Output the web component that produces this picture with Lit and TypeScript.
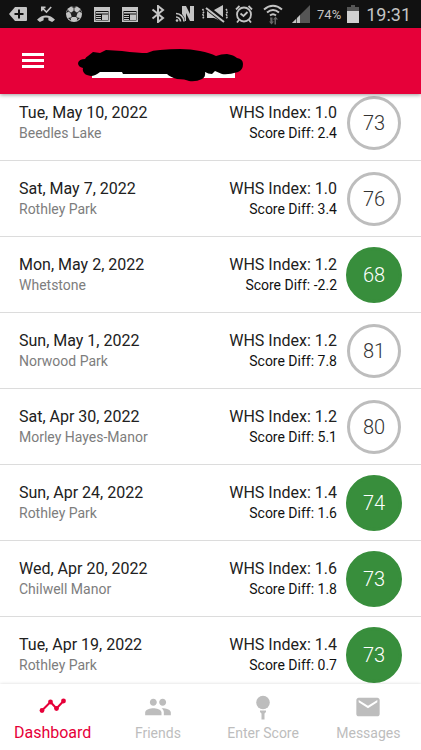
import { LitElement, html, css, svg } from "lit";
import { customElement, property } from "lit/decorators.js";

interface Round {
  date: string;
  course: string;
  index: string;
  diff: string;
  score: number;
  counting: boolean;
}

const rounds: Round[] = [
  { date: "Tue, May 10, 2022", course: "Beedles Lake", index: "1.0", diff: "2.4", score: 73, counting: false },
  { date: "Sat, May 7, 2022", course: "Rothley Park", index: "1.0", diff: "3.4", score: 76, counting: false },
  { date: "Mon, May 2, 2022", course: "Whetstone", index: "1.2", diff: "-2.2", score: 68, counting: true },
  { date: "Sun, May 1, 2022", course: "Norwood Park", index: "1.2", diff: "7.8", score: 81, counting: false },
  { date: "Sat, Apr 30, 2022", course: "Morley Hayes-Manor", index: "1.2", diff: "5.1", score: 80, counting: false },
  { date: "Sun, Apr 24, 2022", course: "Rothley Park", index: "1.4", diff: "1.6", score: 74, counting: true },
  { date: "Wed, Apr 20, 2022", course: "Chilwell Manor", index: "1.6", diff: "1.8", score: 73, counting: true },
  { date: "Tue, Apr 19, 2022", course: "Rothley Park", index: "1.4", diff: "0.7", score: 73, counting: true },
];

const newsPaths = svg`
  <path fill="currentColor" fill-rule="evenodd" d="M1 2h16v15H1zM2.500 6v9.500h13V6z"/>
  <path fill="currentColor" d="M3 7h12v1.500H3zM9 9.500h6v5.500H9zM3 10h5v1H3zM3 12h5v1H3zM3 14h5v1H3z"/>`;

@customElement("status-bar")
export class StatusBar extends LitElement {
  static styles = css`
    :host {
      display: flex;
      align-items: center;
      justify-content: space-between;
      height: 28px;
      padding: 0 10px 0 8px;
      background: #111;
      color: #c4c4c4;
    }
    .group {
      display: flex;
      align-items: center;
      gap: 10px;
    }
    .right {
      gap: 6px;
    }
    .spaced {
      margin-right: 4px;
    }
    svg {
      display: block;
      flex: none;
    }
    .percent {
      font-size: 13px;
    }
    .clock {
      font-size: 18px;
    }
  `;

  render() {
    return html`
      <div class="group">
        <svg width="19" height="18" viewBox="0 0 19 18">
          <path fill="currentColor" d="M7 2h11a1 1 0 0 1 1 1v12a1 1 0 0 1-1 1H7L1 9z"/>
          <path stroke="#111" stroke-width="2" d="M6.500 9h9M11 4.500v9"/>
        </svg>
        <svg width="18" height="18" viewBox="0 0 19 18">
          <path fill="currentColor" d="M0 15c5-6 14-6 19 0l-3 2.500-4-2v-2.500q-2.500-.7-5 0v2.500l-4 2z"/>
          <path fill="none" stroke="currentColor" stroke-width="1.600" d="M5 6V2h4M5 2l5 5 5-5.500"/>
        </svg>
        <svg width="18" height="18" viewBox="0 0 18 18">
          <circle cx="9" cy="9" r="8" fill="currentColor"/>
          <path fill="#222" d="M9 5.500l3.500 2.500-1.300 4H6.800L5.500 8zM6 1.800L9 3l3-1.200L9.500 1h-1zM1 8l2-3.500 1 2zM17 8l-2-3.500-1 2zM3 13l2.500-.5.7 3.300zM15 13l-2.500-.5-.7 3.300z"/>
          <path stroke="#222" stroke-width=".8" d="M9 3v3M4 6.500L6 8M14 6.500L12 8M5.500 12.500L7 12M12.500 12.500L11 12"/>
        </svg>
        <svg width="18" height="18" viewBox="0 0 18 18">${newsPaths}</svg>
        <svg width="18" height="18" viewBox="0 0 18 18">${newsPaths}</svg>
      </div>
      <div class="group right">
        <svg class="spaced" width="14" height="18" viewBox="0 0 14 18">
          <path fill="none" stroke="currentColor" stroke-width="2" d="M1.500 4.500L12 13l-5 4V1l5 4L1.500 13.500"/>
        </svg>
        <svg width="20" height="18" viewBox="0 0 20 18">
          <path fill="currentColor" d="M7 16V1h4l4 8V1h4v15h-4L11 8v8z"/>
          <path fill="#111" d="M0 6q10 1 10 11H0z"/>
          <path fill="none" stroke="currentColor" stroke-width="1.700" d="M1 8.500a8 8 0 0 1 8 8M1 12A4.500 4.500 0 0 1 5.500 16.500"/>
          <circle cx="2" cy="15.500" r="1.300" fill="currentColor"/>
        </svg>
        <svg width="28" height="18" viewBox="0 0 28 18">
          <path fill="none" stroke="currentColor" stroke-width="1.500" stroke-dasharray="2 1" d="M1.500 4l1.500 2.500L1.500 9l1.500 2.500L1.500 14M25 4l1.500 2.500L25 9l1.500 2.500L25 14"/>
          <path fill="currentColor" d="M6 5h7l9-5v17l-9-4H6z"/>
          <path stroke="#111" stroke-width="5" d="M5 2l19 15"/>
          <path stroke="currentColor" stroke-width="2" d="M5 3l18 14"/>
        </svg>
        <svg class="spaced" width="18" height="18" viewBox="0 0 18 18">
          <circle cx="9" cy="9.500" r="7" fill="none" stroke="currentColor" stroke-width="1.800"/>
          <path fill="none" stroke="currentColor" stroke-width="1.800" d="M1 4.500L4.500 1M17 4.500L13.500 1M5.500 8.500L8.500 11l4-4M4 15l-2 2.500M14 15l2 2.500"/>
        </svg>
        <svg width="22" height="22" viewBox="0 0 22 22">
          <path fill="none" stroke="currentColor" stroke-width="2" d="M1 6.500q9-7.500 18 0M4 9.500q6-5 12 0M7 12.500q3-2.500 6 0"/>
          <path fill="#666" d="M7 14.500l2.500 0v4H11l-2.500 3-2.500-3h1.500zM13 21.500h-1.500v-5H10l2.500-3 2.500 3h-2z"/>
        </svg>
        <svg width="20" height="20" viewBox="0 0 20 20">
          <path fill="#555" d="M19 1v18H1z"/>
          <path fill="currentColor" d="M1 19l4-4v4zM6 14l3-3v8H6z"/>
        </svg>
        <span class="percent">74%</span>
        <svg width="13" height="18" viewBox="0 0 13 18">
          <path fill="#555" d="M4 0h4v2h4v5H0V2h4z"/>
          <path fill="#d0d0d0" d="M0 6h12v12H0z"/>
        </svg>
        <span class="clock">19:31</span>
      </div>
    `;
  }
}

@customElement("round-row")
export class RoundRow extends LitElement {
  @property({ attribute: false }) round!: Round;

  static styles = css`
    :host {
      display: flex;
      align-items: center;
      box-sizing: border-box;
      height: 76px;
      padding: 0 19px;
      border-bottom: 1px solid #dcdcdc;
    }
    .text {
      flex: 1;
    }
    .numbers {
      flex: none;
      text-align: right;
      margin-right: 9px;
    }
    .main {
      font-size: 16px;
      line-height: 20px;
      color: #212121;
    }
    .sub {
      font-size: 14px;
      line-height: 20px;
      color: #7d7d7d;
    }
    .numbers .sub {
      color: #111;
    }
    .score {
      flex: none;
      display: flex;
      align-items: center;
      justify-content: center;
      box-sizing: border-box;
      width: 54px;
      height: 54px;
      margin: 1px;
      border: 3px solid #bdbdbd;
      border-radius: 50%;
      font-size: 20px;
      font-weight: 300;
      color: #333;
    }
    .counting {
      width: 56px;
      height: 56px;
      margin: 0;
      border-color: #388e3c;
      background: #388e3c;
      color: #fff;
    }
  `;

  render() {
    const r = this.round;
    return html`
      <div class="text">
        <div class="main">${r.date}</div>
        <div class="sub">${r.course}</div>
      </div>
      <div class="text numbers">
        <div class="main">WHS Index: ${r.index}</div>
        <div class="sub">Score Diff: ${r.diff}</div>
      </div>
      <div class="score ${r.counting ? "counting" : ""}">${r.score}</div>
    `;
  }
}

@customElement("app-root")
export class AppRoot extends LitElement {
  static styles = css`
    :host {
      display: flex;
      flex-direction: column;
      height: 100vh;
      overflow: hidden;
      background: #fff;
      font-family: Roboto, "Liberation Sans", sans-serif;
    }
    header {
      flex: none;
      display: flex;
      align-items: center;
      gap: 34px;
      height: 66px;
      padding: 0 20px;
      background: #e60039;
      box-shadow: 0 1px 4px rgba(0, 0, 0, 0.4);
      z-index: 1;
    }
    button {
      padding: 0;
      border: 0;
      background: none;
      color: #fff;
    }
    svg {
      display: block;
    }
    main {
      flex: 1;
      min-height: 0;
      overflow-y: auto;
      scrollbar-width: none;
    }
    nav {
      flex: none;
      display: grid;
      grid-template-columns: repeat(4, 1fr);
      height: 66px;
      background: #fff;
      box-shadow: 0 0 3px rgba(0, 0, 0, 0.16);
      z-index: 1;
    }
    a {
      display: flex;
      flex-direction: column;
      align-items: center;
      padding-top: 9px;
      color: #bdbdbd;
      font-size: 14px;
      line-height: 24px;
      text-decoration: none;
      white-space: nowrap;
    }
    .active {
      color: #e60039;
      font-size: 16px;
    }
  `;

  firstUpdated() {
    // Opens slightly scrolled, with the first round tucked under the header.
    this.renderRoot.querySelector("main")!.scrollTop = 9;
  }

  render() {
    return html`
      <status-bar></status-bar>
      <header>
        <button aria-label="Menu">
          <svg width="24" height="18" viewBox="0 0 24 18">
            <path fill="currentColor" d="M2 1h22v3H2zM2 7h22v3H2zM2 13h22v3H2z"/>
          </svg>
        </button>
        <svg width="165" height="42" viewBox="0 -9 165 42" role="img" aria-label="Hidden name">
          <path fill="#fff" d="M14 21h143v8H14z"/>
          <path d="M0 14Q1 10 7 10Q8 8 10 7L15 3L22 4L28 1L44 2Q60 4 69 4Q75 1 82 1Q92 0 102 0Q113 0 122 2Q132 4 138 7Q143 5 149 5Q156 6 159 9Q165 10 165 15Q165 21 160 23Q150 26 144 25L137 22L134 25Q130 25 127 23Q128 28 124 30Q118 33 111 32Q107 30 99 30Q92 28 89 25L45 25L44 23L22 23Q17 27 13 27Q8 26 7 25Q4 22 5 19Q0 18 0 14Z"/>
        </svg>
      </header>
      <main>${rounds.map((r) => html`<round-row .round=${r}></round-row>`)}</main>
      <nav>
        <a class="active" href="#dashboard" aria-current="page">
          <svg width="28" height="28" viewBox="0 0 28 28">
            <path fill="none" stroke="currentColor" stroke-width="2" d="M3 17.500L11.500 9l6 6.500L24.500 8"/>
            <g fill="currentColor">
              <circle cx="3" cy="17.500" r="2.400"/><circle cx="11.500" cy="9" r="2.400"/>
              <circle cx="17.500" cy="15.500" r="2.400"/><circle cx="24.500" cy="8" r="2.400"/>
            </g>
          </svg>
          Dashboard
        </a>
        <a href="#friends">
          <svg width="28" height="28" viewBox="0 0 24 24">
            <path fill="currentColor" d="M16 11c1.660 0 2.990-1.340 2.990-3S17.660 5 16 5s-3 1.340-3 3 1.340 3 3 3zm-8 0c1.660 0 2.990-1.340 2.990-3S9.660 5 8 5 5 6.340 5 8s1.340 3 3 3zm0 2c-2.330 0-7 1.170-7 3.500V19h14v-2.500c0-2.330-4.670-3.500-7-3.500zm8 0c-.29 0-.62.020-.97.050 1.160.84 1.970 1.970 1.970 3.450V19h6v-2.500c0-2.330-4.670-3.500-7-3.500z"/>
          </svg>
          Friends
        </a>
        <a href="#score">
          <svg width="28" height="28" viewBox="0 0 28 28">
            <circle cx="14" cy="9.500" r="6.800" fill="currentColor"/>
            <path fill="currentColor" d="M11 17.500h6v1.500l-1.500 1.500v6h-3v-6L11 19z"/>
          </svg>
          Enter Score
        </a>
        <a href="#messages">
          <svg width="28" height="28" viewBox="0 0 24 24">
            <path fill="currentColor" d="M20 4H4c-1.100 0-1.990.9-1.990 2L2 18c0 1.100.9 2 2 2h16c1.100 0 2-.9 2-2V6c0-1.100-.9-2-2-2zm0 4l-8 5-8-5V6l8 5 8-5v2z"/>
          </svg>
          Messages
        </a>
      </nav>
    `;
  }
}
